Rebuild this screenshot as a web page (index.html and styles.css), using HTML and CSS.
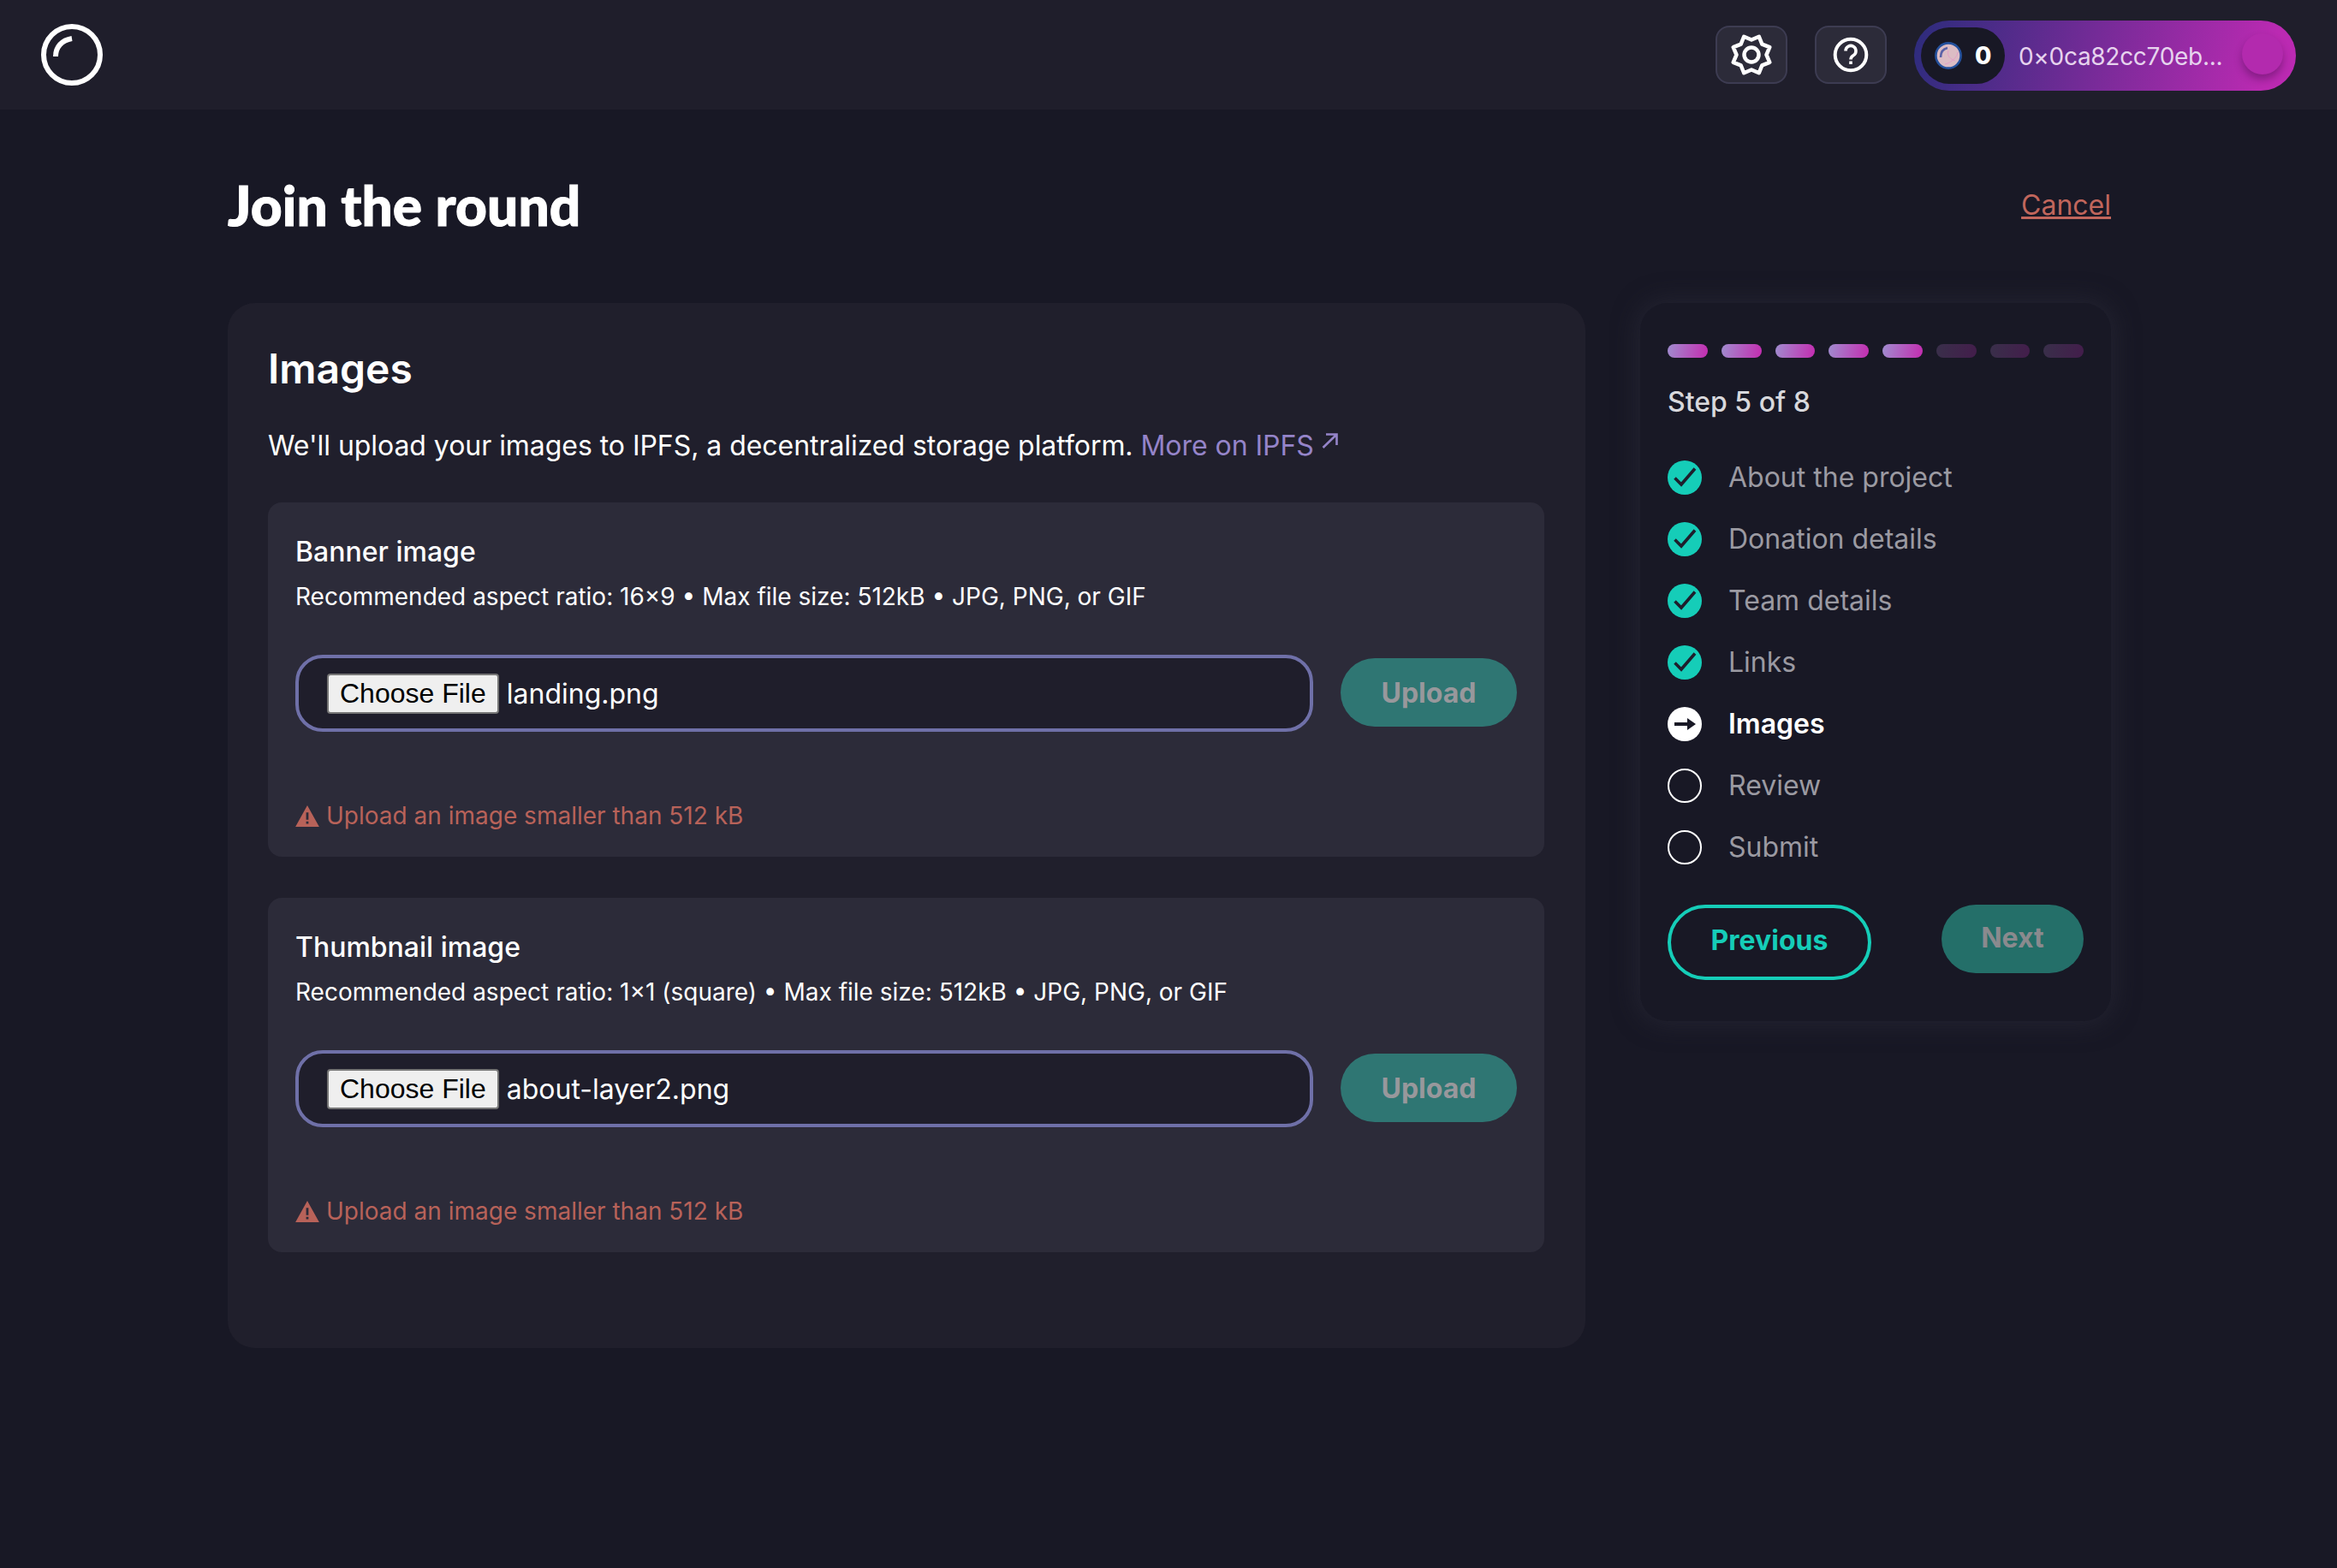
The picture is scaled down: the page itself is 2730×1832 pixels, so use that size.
FILE: index.html
```html
<!DOCTYPE html>
<html lang="en">
<head>
    <meta charset="UTF-8">
    <meta name="viewport" content="width=device-width, initial-scale=1.0">
    <title>Join the round</title>
    <link rel="stylesheet" href="styles.css">
</head>
<body>
    <header class="topbar">
        <svg class="logo" viewBox="0 0 72 72" fill="none" stroke="#fff">
            <circle cx="36" cy="36" r="33" stroke-width="6"/>
            <path d="M17 38 C17 27 24 19 36 17" stroke-width="6"/>
        </svg>
        <div class="topbar-actions">
            <button class="icon-btn">
                <svg viewBox="0 0 56 56" fill="none" stroke="#fff" stroke-width="4.5" stroke-linejoin="round">
                    <path d="M36.8 6.75 40.37 15.63 49.25 19.2 45.5 28 49.25 36.8 40.37 40.37 36.8 49.25 28 45.5 19.2 49.25 15.63 40.37 6.75 36.8 10.5 28 6.75 19.2 15.63 15.63 19.2 6.75 28 10.5z"/>
                    <circle cx="28" cy="28" r="8.5"/>
                </svg>
            </button>
            <button class="icon-btn">
                <svg viewBox="0 0 56 56" fill="none" stroke="#fff" stroke-width="4">
                    <circle cx="28" cy="28" r="18.3"/>
                    <path d="M22 23.5a6 6 0 1 1 9 5.2c-2 1.2-3 2.3-3 4.8" stroke-width="3.6"/>
                    <path d="M28 35.5v3.5" stroke-width="3.6"/>
                </svg>
            </button>
            <div class="wallet">
                <div class="balance">
                    <svg class="coin" viewBox="0 0 32 32">
                        <circle cx="16" cy="16" r="14.6" fill="#dcbcc4" stroke="#23509c" stroke-width="2.6"/>
                        <path d="M7 18C7 12 10 8 15 7" fill="none" stroke="#5a62a8" stroke-width="2.6"/>
                        <path d="M12 26C20 24 26 18 27 12M16 10C14 16 18 20 24 22" fill="none" stroke="#e29fc8" stroke-width="1"/>
                    </svg>
                    <span>0</span>
                </div>
                <span class="address">0×0ca82cc70eb...</span>
                <span class="avatar"></span>
            </div>
        </div>
    </header>

    <main class="page">
        <div class="page-head">
            <h1>Join the round</h1>
            <a class="cancel" href="#">Cancel</a>
        </div>

        <div class="columns">
            <section class="card">
                <h2>Images</h2>
                <p class="intro">We'll upload your images to IPFS, a decentralized storage platform. <a href="#">More on IPFS <svg viewBox="0 0 20 18" fill="none" stroke="currentColor" stroke-width="2.6"><path d="M1.5 17 17.5 1.5M5 1.5h12.5V14"/></svg></a></p>

                <div class="panel">
                    <h3>Banner image</h3>
                    <p class="hint">Recommended aspect ratio: 16×9 • Max file size: 512kB • JPG, PNG, or GIF</p>
                    <div class="upload-row">
                        <div class="file-field">
                            <span class="file-btn">Choose File</span>
                            <span class="file-name">landing.png</span>
                        </div>
                        <button class="btn btn-disabled">Upload</button>
                    </div>
                    <p class="error">
                        <svg viewBox="0 0 20 18"><path fill-rule="evenodd" d="M10 0 20 18H0zM9 6v6h2V6zM9 13.5v2h2v-2z"/></svg>
                        Upload an image smaller than 512 kB
                    </p>
                </div>

                <div class="panel">
                    <h3>Thumbnail image</h3>
                    <p class="hint">Recommended aspect ratio: 1×1 (square) • Max file size: 512kB • JPG, PNG, or GIF</p>
                    <div class="upload-row">
                        <div class="file-field">
                            <span class="file-btn">Choose File</span>
                            <span class="file-name">about-layer2.png</span>
                        </div>
                        <button class="btn btn-disabled">Upload</button>
                    </div>
                    <p class="error">
                        <svg viewBox="0 0 20 18"><path fill-rule="evenodd" d="M10 0 20 18H0zM9 6v6h2V6zM9 13.5v2h2v-2z"/></svg>
                        Upload an image smaller than 512 kB
                    </p>
                </div>
            </section>

            <aside class="steps">
                <div class="progress">
                    <span class="seg on"></span><span class="seg on"></span><span class="seg on"></span><span class="seg on"></span><span class="seg on"></span><span class="seg"></span><span class="seg"></span><span class="seg"></span>
                </div>
                <div class="step-count">Step 5 of 8</div>
                <ul class="step-list">
                    <li><svg viewBox="0 0 40 40"><circle cx="20" cy="20" r="20" fill="#15cdb8"/><path d="M8.5 20.5l7.5 7.5L32 9.5" fill="none" stroke="#1e1e2c" stroke-width="3.6"/></svg>About the project</li>
                    <li><svg viewBox="0 0 40 40"><circle cx="20" cy="20" r="20" fill="#15cdb8"/><path d="M8.5 20.5l7.5 7.5L32 9.5" fill="none" stroke="#1e1e2c" stroke-width="3.6"/></svg>Donation details</li>
                    <li><svg viewBox="0 0 40 40"><circle cx="20" cy="20" r="20" fill="#15cdb8"/><path d="M8.5 20.5l7.5 7.5L32 9.5" fill="none" stroke="#1e1e2c" stroke-width="3.6"/></svg>Team details</li>
                    <li><svg viewBox="0 0 40 40"><circle cx="20" cy="20" r="20" fill="#15cdb8"/><path d="M8.5 20.5l7.5 7.5L32 9.5" fill="none" stroke="#1e1e2c" stroke-width="3.6"/></svg>Links</li>
                    <li class="current"><svg viewBox="0 0 40 40"><circle cx="20" cy="20" r="20" fill="#fff"/><path d="M8 18h15v-5l10 7-10 7v-5H8z" fill="#181825"/></svg>Images</li>
                    <li><svg viewBox="0 0 40 40"><circle cx="20" cy="20" r="19" fill="none" stroke="#fff" stroke-width="2"/></svg>Review</li>
                    <li><svg viewBox="0 0 40 40"><circle cx="20" cy="20" r="19" fill="none" stroke="#fff" stroke-width="2"/></svg>Submit</li>
                </ul>
                <div class="step-actions">
                    <button class="btn btn-outline">Previous</button>
                    <button class="btn btn-disabled btn-next">Next</button>
                </div>
            </aside>
        </div>
    </main>
</body>
</html>
```

FILE: styles.css
```css
* {
    box-sizing: border-box;
}
body {
    margin: 0;
    min-height: 100vh;
    background: #181825;
    color: #fff;
    font-family: 'Inter', sans-serif;
}
h1, h2, h3, p, ul {
    margin: 0;
    padding: 0;
}
.topbar {
    height: 128px;
    padding: 24px 48px 0 48px;
    display: flex;
    justify-content: space-between;
    background: #1f1e2b;
}
.logo {
    width: 72px;
    height: 72px;
    margin-top: 4px;
}
.topbar-actions {
    display: flex;
    gap: 32px;
    height: 82px;
}
.icon-btn {
    width: 84px;
    height: 68px;
    margin-top: 6px;
    padding: 0;
    display: flex;
    align-items: center;
    justify-content: center;
    background: #2c2b39;
    border: 2px solid #3d3c52;
    border-radius: 16px;
}
.icon-btn svg {
    width: 56px;
    height: 56px;
}
.wallet {
    width: 446px;
    height: 82px;
    padding: 8px;
    display: flex;
    align-items: flex-start;
    border-radius: 41px;
    background: linear-gradient(105deg, #2c2c7c 0%, #bb2ab2 92%);
}
.balance {
    width: 98px;
    height: 66px;
    padding-left: 16px;
    display: flex;
    align-items: center;
    gap: 15px;
    border-radius: 33px;
    background: #181825;
    font-size: 28px;
    font-weight: 800;
}
.coin {
    width: 32px;
    height: 32px;
}
.address {
    margin-left: 16px;
    line-height: 68px;
    font-size: 28px;
    letter-spacing: -0.3px;
    color: #e6d3ee;
}
.avatar {
    width: 48px;
    height: 48px;
    margin-top: 7px;
    margin-left: auto;
    margin-right: 7px;
    border-radius: 50%;
    background: #b32aae;
    box-shadow: 0 6px 10px rgba(60, 10, 70, 0.4);
}
.page {
    width: 2200px;
    margin-left: 266px;
}
.page-head {
    height: 226px;
    padding-bottom: 4px;
    display: flex;
    justify-content: space-between;
    align-items: center;
}
h1 {
    font-family: 'Lato', sans-serif;
    font-size: 64px;
    font-weight: 900;
    letter-spacing: 0.1px;
    -webkit-text-stroke: 1px #fff;
}
.cancel {
    font-size: 32px;
    color: #c1665c;
}
.columns {
    display: flex;
    align-items: flex-start;
    gap: 64px;
}
.card {
    width: 1586px;
    height: 1221px;
    padding: 47px 48px 47px 47px;
    background: #201f2c;
    border-radius: 32px;
}
h2 {
    font-size: 48px;
    font-weight: 600;
    line-height: 60px;
}
.intro {
    margin-top: 36px;
    margin-bottom: 42px;
    font-size: 32px;
    letter-spacing: -0.05px;
    line-height: 48px;
}
.intro a {
    color: #9584c9;
    text-decoration: none;
}
.intro svg {
    width: 20px;
    height: 18px;
    vertical-align: 8px;
}
.panel {
    height: 414px;
    margin-bottom: 48px;
    padding: 38px 32px 0;
    background: #2c2b39;
    border-radius: 16px;
}
h3 {
    font-size: 32px;
    font-weight: 500;
    line-height: 40px;
}
.hint {
    margin-top: 12px;
    font-size: 28px;
    line-height: 40px;
}
.upload-row {
    margin-top: 48px;
    display: flex;
    align-items: center;
    gap: 32px;
}
.upload-row .btn {
    margin-bottom: 2px;
}
.file-field {
    flex: 1;
    height: 90px;
    padding-left: 33px;
    display: flex;
    align-items: center;
    gap: 9px;
    background: #1f1e2b;
    border: 4px solid #6f70a8;
    border-radius: 32px;
    font-size: 32px;
}
.file-btn {
    height: 47px;
    padding: 0 13px;
    display: flex;
    align-items: center;
    background: #efefef;
    border: 2px solid #767676;
    border-radius: 4px;
    color: #000;
    font-family: 'Liberation Sans', sans-serif;
}
.btn {
    height: 80px;
    border-radius: 40px;
    font-family: 'Inter', sans-serif;
    font-size: 32px;
    font-weight: 700;
}
.btn-disabled {
    width: 206px;
    background: #2f7673;
    border: none;
    color: #98989c;
}
.error {
    margin-top: 78px;
    display: flex;
    align-items: center;
    gap: 8px;
    font-size: 28px;
    line-height: 40px;
    color: #b86259;
}
.error svg {
    width: 28px;
    height: 25px;
    fill: #b86259;
}
.steps {
    width: 550px;
    height: 839px;
    padding: 48px 32px 0;
    background: #181825;
    border-radius: 32px;
    box-shadow: 0 0 28px 4px rgba(46, 45, 60, 0.5);
}
.progress {
    display: flex;
    gap: 16px;
}
.seg {
    flex: 1;
    height: 16px;
    border-radius: 8px;
    background: linear-gradient(100deg, #392f4a, #431d4b);
}
.seg.on {
    background: linear-gradient(100deg, #a08ccf, #c42cb0);
}
.step-count {
    margin-top: 30px;
    font-size: 32px;
    font-weight: 500;
    line-height: 44px;
    color: #d8d8dc;
}
.step-list {
    margin-top: 46px;
    list-style: none;
}
.step-list li {
    height: 72px;
    display: flex;
    align-items: flex-start;
    gap: 31px;
    font-size: 32px;
    line-height: 40px;
    color: #9b9aa2;
}
.step-list svg {
    width: 40px;
    height: 40px;
    flex: none;
}
.step-list .current {
    color: #fff;
    font-weight: 600;
}
.step-actions {
    margin-top: 15px;
    display: flex;
    justify-content: space-between;
    align-items: flex-start;
}
.btn-outline {
    width: 238px;
    height: 88px;
    padding-bottom: 6px;
    background: transparent;
    border: 4px solid #15cdb8;
    border-radius: 44px;
    color: #15cdb8;
}
.btn-next {
    width: 166px;
    padding-bottom: 4px;
    background: #246f69;
    color: #8a8a8e;
}
```
